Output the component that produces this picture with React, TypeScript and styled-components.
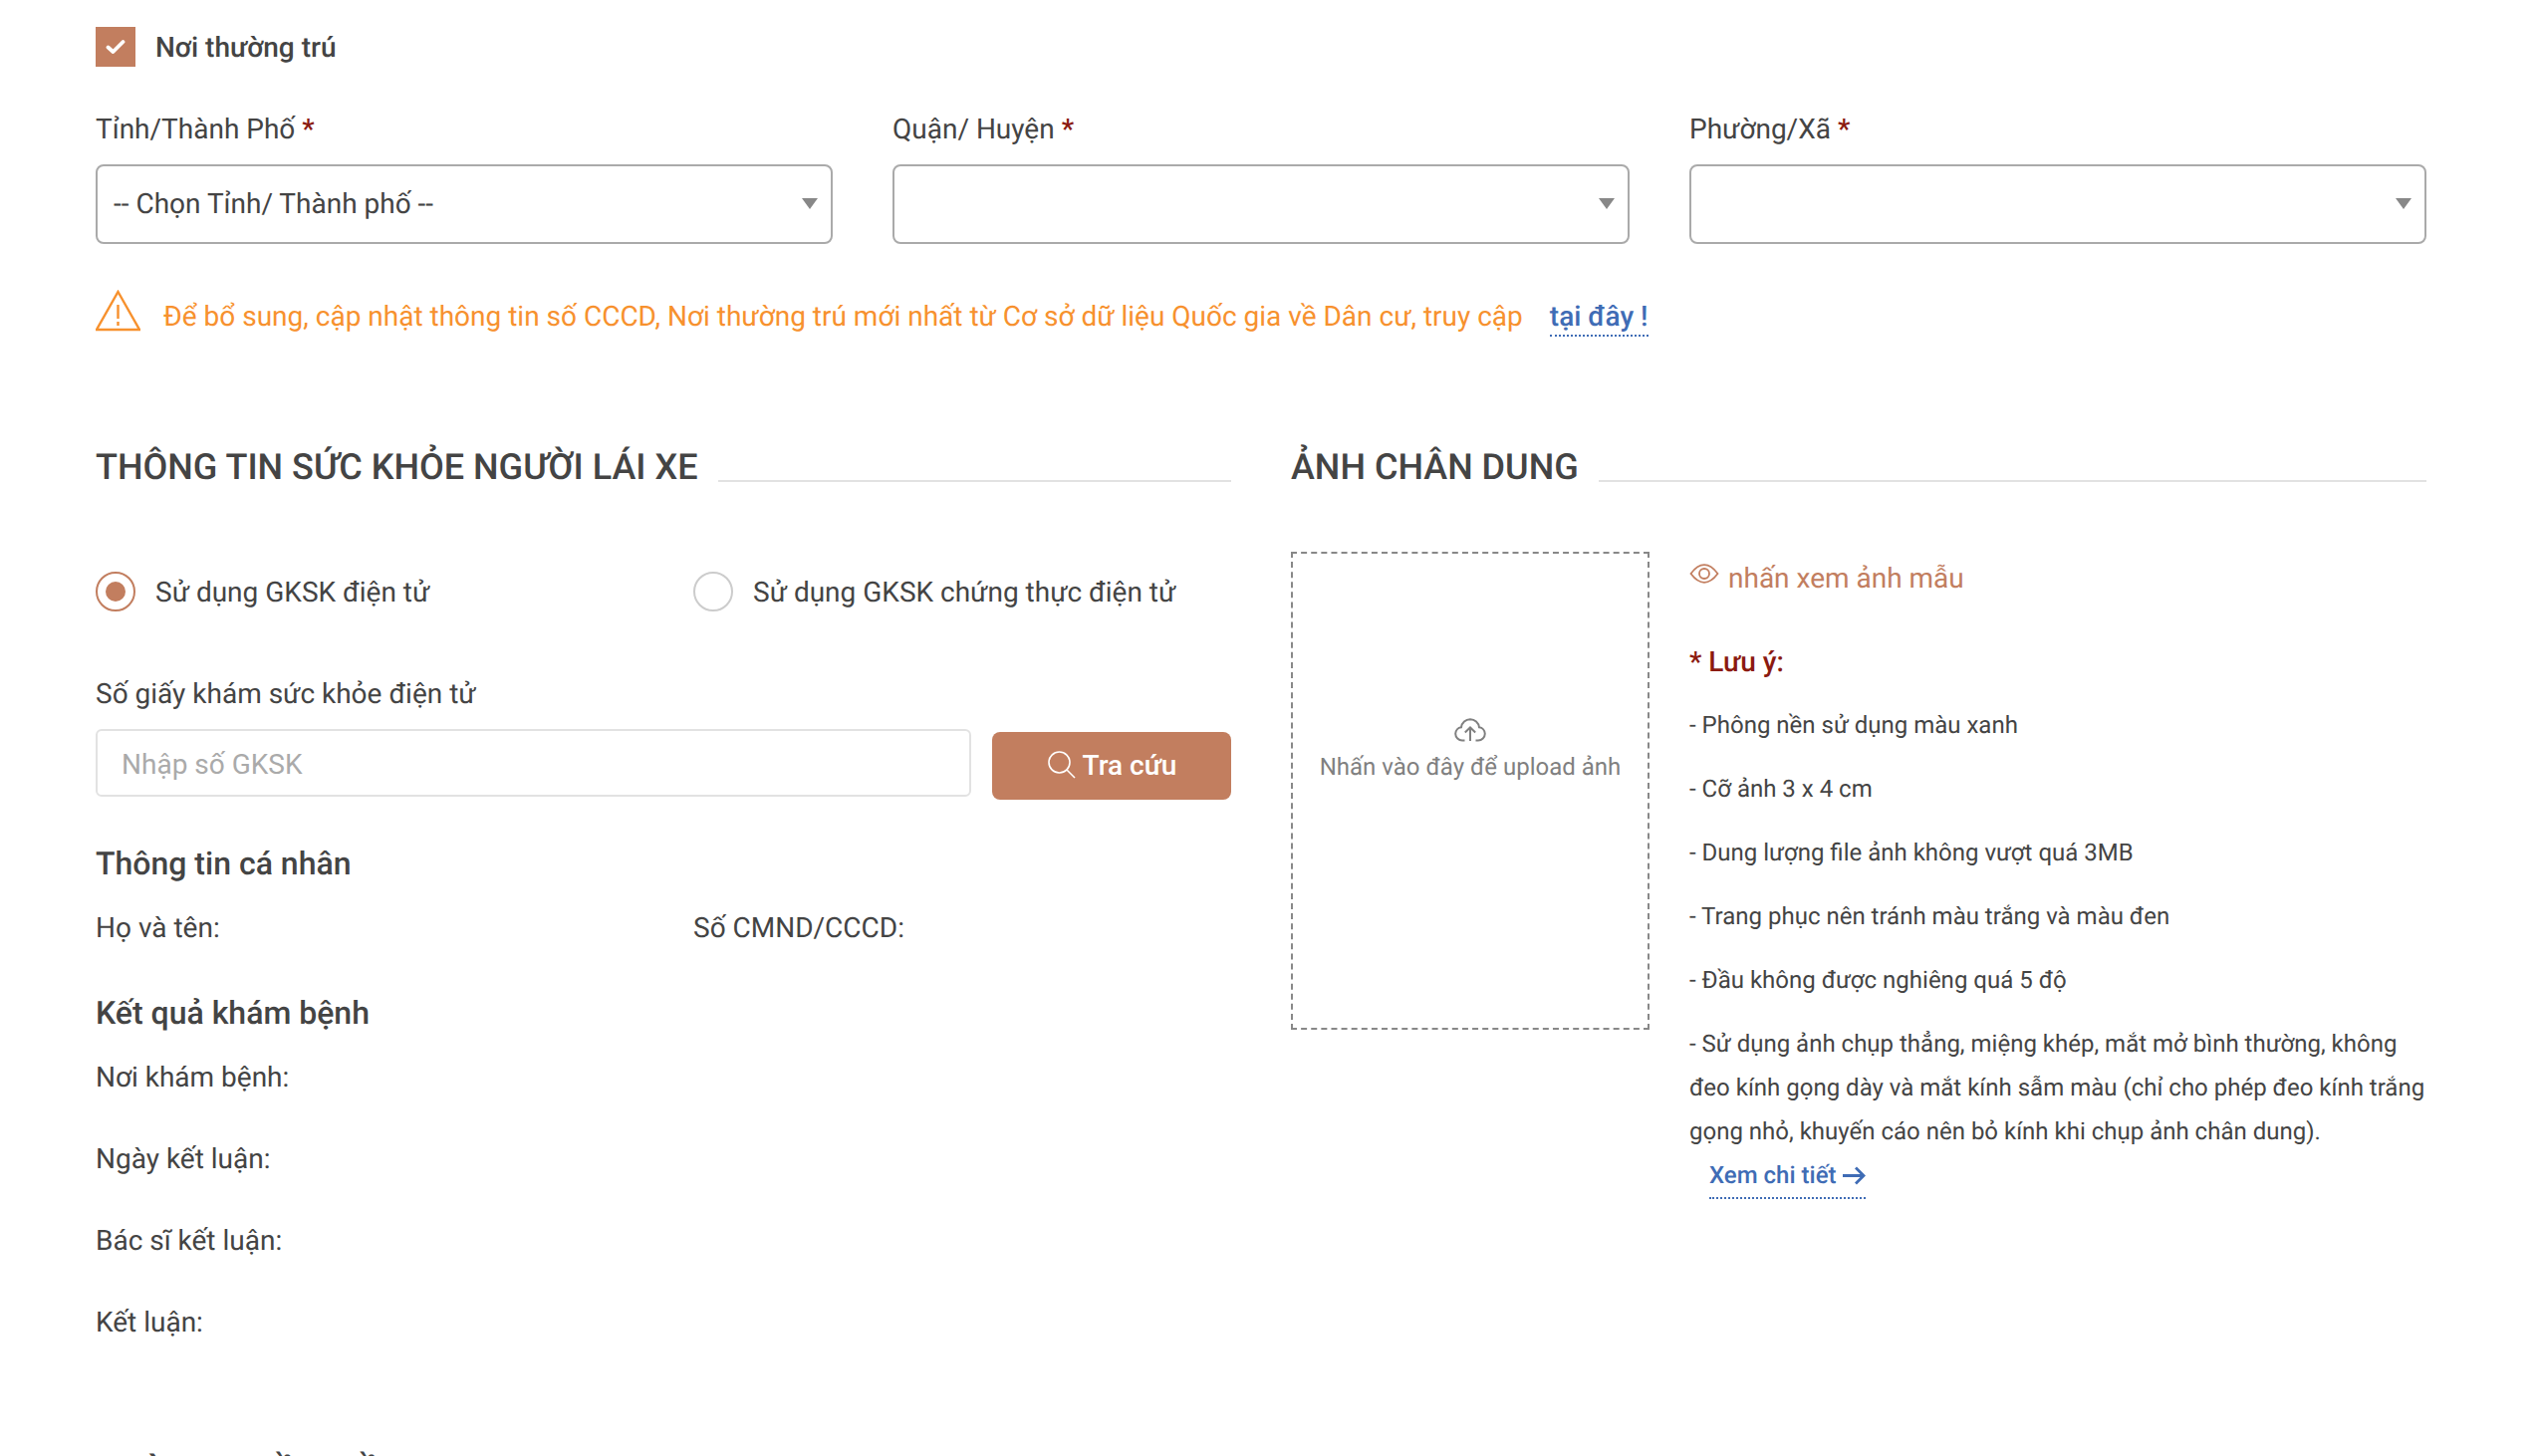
import React from "react";
import styled, { createGlobalStyle } from "styled-components";

const Global = createGlobalStyle`
  html, body { margin: 0; padding: 0; height: 100%; overflow: hidden; background: #fff; }
  body { font-family: Roboto, "Liberation Sans", sans-serif; color: #444; font-size: 28px; text-rendering: geometricPrecision; }
  * { box-sizing: border-box; }
`;

const Page = styled.div`
  padding: 27px 114px 0 96px;
  display: flex;
  flex-direction: column;
`;
const CheckRow = styled.div`
  display: flex;
  align-items: center;
  gap: 20px;
  height: 40px;
`;
const CheckBox = styled.span`
  width: 40px;
  height: 40px;
  background: #c27e5f;
  display: flex;
  align-items: center;
  justify-content: center;
`;
const CheckLabel = styled.span`
  font-weight: 500;
  font-size: 28px;
  color: #444;
`;
const AddressGrid = styled.div`
  display: grid;
  grid-template-columns: repeat(3, 740px);
  column-gap: 60px;
  margin-top: 43px;
`;
const Field = styled.div`
  display: flex;
  flex-direction: column;
`;
const FieldLabel = styled.label`
  display: block;
  font-size: 28px;
  line-height: 40px;
  margin-bottom: 15px;
`;
const Req = styled.span`
  color: #8b1a10;
  font-weight: 500;
`;
const SelectBox = styled.div`
  position: relative;
  height: 80px;
  border: 2px solid #aaa;
  border-radius: 8px;
  padding: 0 16px 1px;
  display: flex;
  align-items: center;
  font-size: 28px;
  &::after {
    content: "";
    position: absolute;
    right: 13px;
    top: 32px;
    border-left: 8px solid transparent;
    border-right: 8px solid transparent;
    border-top: 11px solid #888;
  }
`;
const Warning = styled.div`
  display: flex;
  align-items: center;
  margin-top: 47px;
  height: 40px;
  font-size: 28px;
  color: #f7912e;
`;
const WarnText = styled.span`
  margin-left: 23px;
  position: relative;
  top: 5px;
`;
const WarnLink = styled.a`
  margin-left: 27px;
  color: #3f6cb5;
  font-weight: 500;
  border-bottom: 2px dotted #3f6cb5;
  line-height: 37px;
  position: relative;
  top: 6px;
`;
const Columns = styled.div`
  display: grid;
  grid-template-columns: 1140px 1140px;
  column-gap: 60px;
  margin-top: 112px;
`;
const Column = styled.div`
  display: flex;
  flex-direction: column;
  min-width: 0;
`;
const SectionHead = styled.div`
  display: flex;
  align-items: flex-end;
  gap: 20px;
  height: 50px;
`;
const SectionTitle = styled.h2`
  margin: 0;
  font-size: 36px;
  font-weight: 500;
  line-height: 50px;
  color: #444;
  white-space: nowrap;
`;
const SectionRule = styled.span`
  flex: 1;
  height: 2px;
  margin-bottom: 10px;
  background: #e2e2e2;
`;
const RadioRow = styled.div`
  display: grid;
  grid-template-columns: 600px 1fr;
  margin-top: 80px;
`;
const RadioItem = styled.div`
  display: flex;
  align-items: center;
  gap: 20px;
  height: 40px;
  font-size: 28px;
`;
const RadioDot = styled.span<{ $on?: boolean }>`
  width: 40px;
  height: 40px;
  border-radius: 50%;
  border: 2px solid ${(p) => (p.$on ? "#c27e5f" : "#ccc")};
  display: flex;
  align-items: center;
  justify-content: center;
  &::after {
    content: "";
    display: ${(p) => (p.$on ? "block" : "none")};
    width: 20px;
    height: 20px;
    border-radius: 50%;
    background: #c27e5f;
  }
`;
const LookupLabel = styled.div`
  font-size: 28px;
  line-height: 40px;
  margin-top: 63px;
`;
const LookupRow = styled.div`
  display: flex;
  align-items: flex-start;
  gap: 21px;
  margin-top: 15px;
`;
const TextBox = styled.input`
  flex: 1;
  height: 68px;
  border: 2px solid #e2e2e2;
  border-radius: 6px;
  padding: 2px 24px 0;
  font-family: inherit;
  font-size: 28px;
  color: #444;
  outline: none;
  &::placeholder { color: #aaa; opacity: 1; }
`;
const LookupButton = styled.button`
  width: 240px;
  height: 68px;
  margin-top: 3px;
  border: 0;
  border-radius: 8px;
  padding: 0 0 2px;
  background: #c27e5f;
  color: #fff;
  font-family: inherit;
  font-size: 28px;
  font-weight: 500;
  display: flex;
  align-items: center;
  justify-content: center;
  gap: 6px;
`;
const SubHead = styled.h3<{ $top: number }>`
  margin: ${(p) => p.$top}px 0 0;
  font-size: 32px;
  font-weight: 500;
  line-height: 44px;
  color: #444;
`;
const InfoGrid = styled.div`
  display: grid;
  grid-template-columns: 600px 1fr;
  margin-top: 21px;
`;
const InfoText = styled.div`
  font-size: 28px;
  line-height: 44px;
`;
const ResultList = styled.div`
  display: flex;
  flex-direction: column;
  gap: 38px;
  margin-top: 21px;
`;
const PhotoBody = styled.div`
  display: flex;
  gap: 40px;
  margin-top: 60px;
`;
const UploadBox = styled.div`
  width: 360px;
  height: 480px;
  flex: none;
  border: 2px dashed #888;
  padding-top: 165px;
  display: flex;
  flex-direction: column;
  align-items: center;
`;
const UploadText = styled.div`
  font-size: 24px;
  line-height: 32px;
  color: #808080;
  margin-top: 9px;
  white-space: nowrap;
`;
const NotesCol = styled.div`
  flex: 1;
  display: flex;
  flex-direction: column;
  min-width: 0;
`;
const SampleLink = styled.div`
  display: flex;
  align-items: center;
  gap: 9px;
  height: 40px;
  margin-top: 6px;
  font-size: 28px;
  color: #c27e5f;
`;
const EyeIcon = styled.svg`
  margin-bottom: 8px;
  flex: none;
`;
const NoteTitle = styled.div`
  margin: 45px 0 1px;
  font-size: 28px;
  font-weight: 500;
  line-height: 40px;
  color: #8b1a10;
`;
const NoteLine = styled.p`
  margin: 20px 0 0;
  font-size: 24px;
  line-height: 44px;
  color: #444;
`;
const DetailLink = styled.a`
  align-self: flex-start;
  margin: 4px 0 0 20px;
  font-size: 24px;
  font-weight: 500;
  line-height: 36px;
  color: #3f6cb5;
  border-bottom: 2px dotted #3f6cb5;
  padding-bottom: 4px;
  display: flex;
  align-items: center;
  gap: 6px;
`;
const BottomHead = styled.div`
  margin-top: 105px;
`;

const notes = [
  "- Phông nền sử dụng màu xanh",
  "- Cỡ ảnh 3 x 4 cm",
  "- Dung lượng file ảnh không vượt quá 3MB",
  "- Trang phục nên tránh màu trắng và màu đen",
  "- Đầu không được nghiêng quá 5 độ",
  "- Sử dụng ảnh chụp thẳng, miệng khép, mắt mở bình thường, không đeo kính gọng dày và mắt kính sẫm màu (chỉ cho phép đeo kính trắng gọng nhỏ, khuyến cáo nên bỏ kính khi chụp ảnh chân dung).",
];

export default function App() {
  return (
    <Page>
      <Global />
      <CheckRow>
        <CheckBox>
          <svg width="20" height="16" viewBox="0 0 20 16" fill="none">
            <path d="M2.5 8.5 7.5 13 17.5 3" stroke="#fff" strokeWidth="3.8" strokeLinecap="round" strokeLinejoin="round" />
          </svg>
        </CheckBox>
        <CheckLabel>Nơi thường trú</CheckLabel>
      </CheckRow>
      <AddressGrid>
        <Field>
          <FieldLabel>Tỉnh/Thành Phố <Req>*</Req></FieldLabel>
          <SelectBox>-- Chọn Tỉnh/ Thành phố --</SelectBox>
        </Field>
        <Field>
          <FieldLabel>Quận/ Huyện <Req>*</Req></FieldLabel>
          <SelectBox />
        </Field>
        <Field>
          <FieldLabel>Phường/Xã <Req>*</Req></FieldLabel>
          <SelectBox />
        </Field>
      </AddressGrid>
      <Warning>
        <svg width="45" height="42" viewBox="0 0 45 42" fill="none">
          <path d="M22.5 2 44 40H1Z" stroke="#f7912e" strokeWidth="2.4" strokeLinejoin="miter" />
          <path d="M22.5 15V29M22.5 32V36" stroke="#f7912e" strokeWidth="2.4" />
        </svg>
        <WarnText>Để bổ sung, cập nhật thông tin số CCCD, Nơi thường trú mới nhất từ Cơ sở dữ liệu Quốc gia về Dân cư, truy cập</WarnText>
        <WarnLink>tại đây !</WarnLink>
      </Warning>
      <Columns>
        <Column>
          <SectionHead>
            <SectionTitle>THÔNG TIN SỨC KHỎE NGƯỜI LÁI XE</SectionTitle>
            <SectionRule />
          </SectionHead>
          <RadioRow>
            <RadioItem><RadioDot $on />Sử dụng GKSK điện tử</RadioItem>
            <RadioItem><RadioDot />Sử dụng GKSK chứng thực điện tử</RadioItem>
          </RadioRow>
          <LookupLabel>Số giấy khám sức khỏe điện tử</LookupLabel>
          <LookupRow>
            <TextBox placeholder="Nhập số GKSK" />
            <LookupButton>
              <svg width="30" height="30" viewBox="0 0 30 30" fill="none">
                <circle cx="12.5" cy="12.5" r="10.5" stroke="#fff" strokeWidth="1.6" />
                <path d="M20 20 28 28" stroke="#fff" strokeWidth="1.6" />
              </svg>
              Tra cứu
            </LookupButton>
          </LookupRow>
          <SubHead $top={42}>Thông tin cá nhân</SubHead>
          <InfoGrid>
            <InfoText>Họ và tên:</InfoText>
            <InfoText>Số CMND/CCCD:</InfoText>
          </InfoGrid>
          <SubHead $top={41}>Kết quả khám bệnh</SubHead>
          <ResultList>
            <InfoText>Nơi khám bệnh:</InfoText>
            <InfoText>Ngày kết luận:</InfoText>
            <InfoText>Bác sĩ kết luận:</InfoText>
            <InfoText>Kết luận:</InfoText>
          </ResultList>
        </Column>
        <Column>
          <SectionHead>
            <SectionTitle>ẢNH CHÂN DUNG</SectionTitle>
            <SectionRule />
          </SectionHead>
          <PhotoBody>
            <UploadBox>
              <svg width="32" height="24" viewBox="0 0 32 24" fill="none">
                <path d="M10.5 22.5H8A6.8 6.8 0 0 1 1.2 15.8 6.8 6.8 0 0 1 7 9.3 9.3 9.3 0 0 1 16 1.2 9.3 9.3 0 0 1 25 9.3 6.8 6.8 0 0 1 30.8 15.8 6.8 6.8 0 0 1 24 22.5H21.5" stroke="#808080" strokeWidth="2" />
                <path d="M16 23V9.5M10.8 14.5 16 9.5 21.2 14.5" stroke="#808080" strokeWidth="2" />
              </svg>
              <UploadText>Nhấn vào đây để upload ảnh</UploadText>
            </UploadBox>
            <NotesCol>
              <SampleLink>
                <EyeIcon width="30" height="20" viewBox="0 0 30 20" fill="none">
                  <path d="M1.5 10C6 4 10 1.2 15 1.2S24 4 28.5 10C24 16 20 18.8 15 18.8S6 16 1.5 10Z" stroke="#c27e5f" strokeWidth="1.8" />
                  <circle cx="15" cy="10" r="5" stroke="#c27e5f" strokeWidth="1.8" />
                </EyeIcon>
                nhấn xem ảnh mẫu
              </SampleLink>
              <NoteTitle>* Lưu ý:</NoteTitle>
              {notes.map((n) => (
                <NoteLine key={n}>{n}</NoteLine>
              ))}
              <DetailLink>
                Xem chi tiết
                <svg width="24" height="19" viewBox="0 0 24 19" fill="none">
                  <path d="M1 9.5H22M14 1.5 22 9.5 14 17.5" stroke="#3f6cb5" strokeWidth="2.8" />
                </svg>
              </DetailLink>
            </NotesCol>
          </PhotoBody>
        </Column>
      </Columns>
      <BottomHead>
        <SectionTitle>THÀNH PHẦN HỒ SƠ</SectionTitle>
      </BottomHead>
    </Page>
  );
}
